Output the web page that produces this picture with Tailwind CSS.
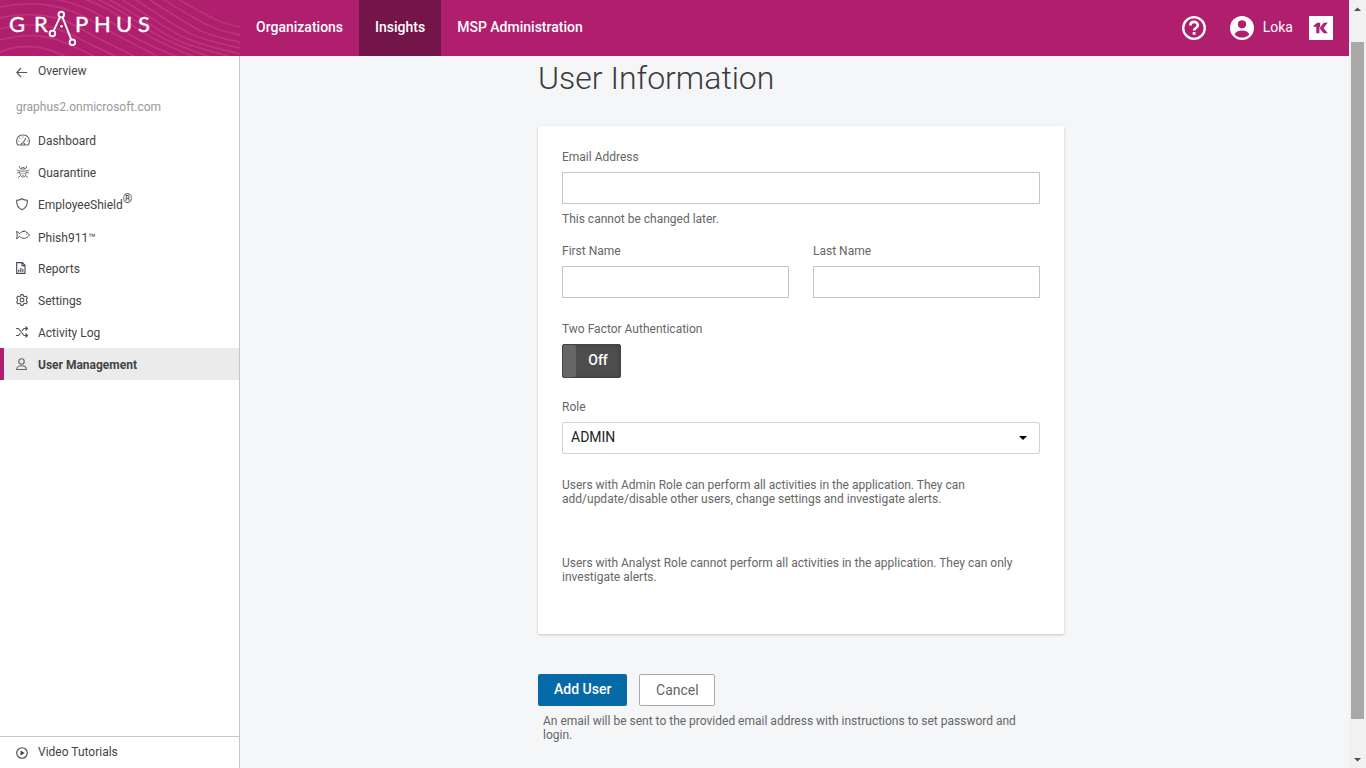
<!DOCTYPE html>
<html lang="en">
<head>
<meta charset="utf-8">
<title>Graphus - User Information</title>
<meta name="viewport" content="width=device-width, initial-scale=1">
<script src="https://cdn.jsdelivr.net/npm/@tailwindcss/browser@4"></script>
</head>
<body class="flex h-screen overflow-hidden bg-[#f5f6f8] font-['Roboto',sans-serif] text-xs text-[#666]">
<div class="flex min-w-0 flex-1 flex-col">
  <header class="relative flex h-14 shrink-0 items-stretch bg-[#b01e6e] text-sm font-medium text-white">
    <svg class="absolute inset-y-0 left-0 h-14 w-60" viewBox="0 0 240 56" fill="none" stroke="#b8347b" stroke-width="1.8" aria-hidden="true">
      <path d="M0 7C38 0 65 5 92 21C125 41 148 50 174 66"/>
      <path d="M0 18C38 10 62 17 85 31C108 45 128 51 140 60"/>
      <path d="M0 29C34 20 58 27 78 38C98 49 110 52 122 60"/>
      <path d="M0 40C32 31 54 37 72 46C86 52 94 56 100 60"/>
      <path d="M0 52C24 42 48 46 72 60"/>
      <path d="M46 -2C84 2 105 18 127 33C150 48 170 52 193 64"/>
      <path d="M74 -4C104 4 120 17 142 32C163 46 184 51 207 63"/>
      <path d="M90 -4C117 7 134 20 154 33C176 47 197 51 222 62"/>
      <path d="M103 -4C129 10 146 22 165 34C187 47 211 50 240 60"/>
      <path d="M116 -4C141 11 158 23 177 34C198 45 218 48 240 54"/>
      <path d="M130 -4C153 11 170 23 189 33C206 41 222 44 240 48"/>
      <path d="M144 -4C164 9 183 22 201 31C215 37 228 40 240 42"/>
      <path d="M158 -4C177 8 194 19 212 27C222 31 231 33 240 35"/>
      <path d="M173 -4C190 6 205 15 219 21C227 24 234 26 240 27"/>
    </svg>
    <a href="#" aria-label="Graphus" class="relative w-60 shrink-0">
      <svg class="h-14 w-40" viewBox="0 0 160 56">
        <g fill="#fff" stroke="#fff" stroke-width=".4" font-family="Lato, sans-serif" font-size="22" font-weight="400">
          <text x="9 34" y="32">GR</text>
          <text x="75 94 116 138" y="32">PHUS</text>
        </g>
        <g fill="none" stroke="#fff" stroke-width="1.9">
          <circle cx="61.3" cy="14.6" r="2.8"/><circle cx="52.4" cy="33.4" r="2.8"/><circle cx="72.4" cy="42.3" r="2.8"/>
          <path d="M60 17.2L53.6 30.8M62.5 17.2L71.2 39.7"/>
        </g>
        <circle cx="61.5" cy="26.3" r="1.4" fill="#fff"/>
      </svg>
    </a>
    <nav class="relative flex" aria-label="Main">
      <a href="#" class="flex items-center px-4 pb-0.5">Organizations</a>
      <a href="#" aria-current="page" class="flex items-center bg-[#731548] px-4 pb-0.5">Insights</a>
      <a href="#" class="flex items-center px-4 pb-0.5">MSP Administration</a>
    </nav>
    <div class="ml-auto flex items-center pr-4">
      <button type="button" aria-label="Help" class="mr-6">
        <svg class="size-6" viewBox="0 0 24 24"><circle cx="12" cy="12" r="10.8" fill="none" stroke="#fff" stroke-width="2.3"/><path d="M8.400 9.600c0-4.900 7.400-4.800 7.400-.4 0 2.800-3.700 2.800-3.700 5.400" fill="none" stroke="#fff" stroke-width="2.6"/><path d="M10.700 16h2.800v2.700h-2.800z" fill="#fff"/></svg>
      </button>
      <button type="button" class="flex items-center gap-[9px] font-normal">
        <svg class="size-6" viewBox="0 0 24 24" aria-hidden="true"><circle cx="12" cy="12" r="12" fill="#fff"/><circle cx="12" cy="8.300" r="4.100" fill="#b01e6e"/><path d="M4.600 18.200c1.600-2.500 4.300-3.600 7.400-3.600s5.800 1.100 7.400 3.600c-1.800 2.200-4.400 3.400-7.400 3.400s-5.600-1.200-7.400-3.400z" fill="#b01e6e"/></svg>
        <span class="pb-0.5">Loka</span>
      </button>
      <button type="button" aria-label="Kaseya One" class="ml-4">
        <svg class="size-6" viewBox="0 0 24 24"><path d="M0 0h24v24H0z" fill="#fff"/><path d="M4.500 9.800L8.200 6.800h3v4.400l3.600-4.400h4l-4.300 5.300 4.300 5.100h-4.100l-4.100-4.900 1-.9-1.200-.300v6.100H7.300V10.800H4.500z" fill="#b01e6e"/></svg>
      </button>
    </div>
  </header>

  <div class="flex min-h-0 flex-1">
    <aside class="flex w-60 shrink-0 flex-col border-r border-[#c4c6c9] bg-white text-[#444]">
      <a href="#" class="flex h-[30px] items-center gap-[9px] px-4">
        <svg class="size-[13px]" viewBox="0 0 13 13" fill="none" stroke="#555" stroke-width="1.1"><path d="M11.200 7.500H.8M5 3L.8 7.500 5 12"/></svg>Overview
      </a>
      <p class="flex h-[38px] items-center px-4 pt-1 text-[#999]">graphus2.onmicrosoft.com</p>
      <nav class="flex flex-col" aria-label="Insights">
        <a href="#" class="flex h-8 items-center gap-[9px] px-4"><svg class="-mr-px size-[14px]" viewBox="0 0 14 14" fill="none" stroke="#666" stroke-width="1.1"><path d="M2 12C-.5 9.500.2 2 7 2s7.500 7.500 5 10zM5.200 12c0-3 3.600-3 3.600 0M7.500 9L10 5"/><path d="M2.300 8h1M3.500 4.800l.8.8M6.500 4h1M10.800 8h1"/></svg><span class="pt-0.5">Dashboard</span></a>
        <a href="#" class="flex h-8 items-center gap-[9px] px-4"><svg class="-mr-px size-[14px]" viewBox="0 0 14 14" fill="none" stroke="#666" stroke-width=".9"><path d="M4 .8C2.700 2.600 4 4 5.300 4h3.400C10 4 11.300 2.600 10 .8M5.300 4l.4-1.400h2.600L8.700 4M.7 4.800c1.500 1.400 4 1.300 6.300 1.300s4.800.1 6.300-1.300M1 8.200l2.800-1.300.5 3.200 1.600 1.900h2.200l1.600-1.900.5-3.200L13 8.200M2 12.500l2.400-1.800M12 12.500l-2.400-1.800M5.300 8.300h1.200M7.500 8.300h1.200M6.200 10.300h1.600"/></svg><span class="pt-0.5">Quarantine</span></a>
        <a href="#" class="flex h-8 items-center gap-[9px] px-4"><svg class="size-[13px]" viewBox="0 0 13 13" fill="none" stroke="#555" stroke-width="1.1"><path d="M6 .7c1.500 1 3.300 1.500 5.300 1.500.3 4.500-1.200 8-5.300 9.500C1.900 10.200.4 6.700.7 2.200 2.700 2.200 4.500 1.700 6 .7z"/></svg><span class="pt-0.5">EmployeeShield<sup class="text-xs">®</sup></span></a>
        <a href="#" class="flex h-8 items-center gap-[9px] px-4"><svg class="-mr-px size-[14px]" viewBox="0 0 14 14" fill="none" stroke="#555"><path d="M.6 2.200l3 2.400C6 1.500 10.500 1.500 13.400 6c-2.900 4.500-7.400 4-9.800 1.400l-3 2.400L1.200 6z"/><path d="M10 5.200h1M7 2.500l1.500-1"/></svg><span class="pt-[3px]">Phish911™</span></a>
        <a href="#" class="flex h-8 items-center gap-[9px] px-4"><svg class="size-[13px]" viewBox="0 0 13 13" fill="none" stroke="#4d4250" stroke-width="1.1"><path d="M.7.600h5.600L9 3.300v8.100H.7zM6 .8v2.800h2.800M2.800 10V7.500M4.800 10V6M6.800 10V7"/></svg><span class="pt-0.5">Reports</span></a>
        <a href="#" class="flex h-8 items-center gap-[9px] px-4"><svg class="size-[13px]" viewBox="0 0 13 13" fill="none" stroke="#555" stroke-width="1.1"><path d="M5 .6h2l.5 1.500 1.200.6 1.500-.5L11.400 4l-.9 1.200v1.600l.9 1.200-1.200 1.800-1.500-.5-1.200.6L7 11.400H5l-.5-1.500-1.200-.6-1.500.5L.6 8l.9-1.200V5.200L.6 4l1.200-1.800 1.500.5 1.200-.6z"/><circle cx="6" cy="6" r="1.900"/></svg><span class="pt-0.5">Settings</span></a>
        <a href="#" class="flex h-8 items-center gap-[9px] px-4"><svg class="size-[13px]" viewBox="0 0 13 13" fill="none" stroke="#555" stroke-width="1.1"><path d="M0 2.500h2.500l5.500 7h3.500M0 9.500h2.500l1.800-2.200M6 4.900l2-2.400h3.500M9.500.5l2 2-2 2M9.500 7.500l2 2-2 2"/></svg><span class="pt-0.5">Activity Log</span></a>
        <a href="#" aria-current="page" class="flex h-8 items-center gap-[9px] border-l-4 border-[#b01e6e] bg-[#ebebeb] pl-3 font-bold"><svg class="size-[13px]" viewBox="0 0 13 13" fill="none" stroke="#666" stroke-width="1.1"><circle cx="5.500" cy="3.500" r="2.700"/><path d="M.6 11.500c0-5 9.800-5 9.800 0z"/></svg><span class="pt-0.5">User Management</span></a>
      </nav>
      <a href="#" class="mt-auto flex h-8 items-center gap-[9px] border-t border-[#c4c6c9] px-4"><svg class="size-[13px]" viewBox="0 0 13 13"><circle cx="6" cy="7" r="5.300" fill="none" stroke="#444" stroke-width="1.1"/><path d="M4.500 4.500L8.700 7l-4.200 2.500z" fill="#444"/></svg><span class="pb-0.5">Video Tutorials</span></a>
    </aside>

    <main class="min-w-0 flex-1 overflow-hidden pl-[13px]">
      <form class="mx-auto max-w-[526px]">
        <h1 class="pt-0.5 text-[32px] leading-10 font-light text-[#3c3c3c]">User Information</h1>
        <section class="mt-7 rounded-xs bg-white px-6 pt-6 pb-[50px] leading-[14px] shadow-[0_1px_3px_rgba(0,0,0,0.2)]">
          <label for="email" class="block">Email Address</label>
          <input id="email" type="email" class="mt-2 block h-8 w-full border border-[#c4c4c4] px-2 text-sm">
          <p class="mt-2">This cannot be changed later.</p>
          <div class="mt-[18px] grid grid-cols-2 gap-6">
            <div><label for="first" class="block">First Name</label><input id="first" type="text" class="mt-2 block h-8 w-full border border-[#c4c4c4] px-2 text-sm"></div>
            <div><label for="last" class="block">Last Name</label><input id="last" type="text" class="mt-2 block h-8 w-full border border-[#c4c4c4] px-2 text-sm"></div>
          </div>
          <label for="tfa" class="mt-6 block">Two Factor Authentication</label>
          <label class="mt-2 flex h-[34px] w-[59px] items-stretch rounded-xs border border-[#444] bg-[#4d4d4d] text-sm font-medium text-white shadow-[inset_0_0_4px_rgba(0,0,0,0.2)]">
            <input id="tfa" type="checkbox" role="switch" class="sr-only">
            <span class="w-[13px] rounded-xs bg-[#666]"></span>
            <span class="flex flex-1 items-center justify-center pb-0.5">Off</span>
          </label>
          <label for="role" class="mt-[22px] block">Role</label>
          <div class="relative mt-2">
            <select id="role" class="block h-8 w-full appearance-none rounded-xs border border-[#d2d2d2] bg-white px-2 pb-0.5 text-sm text-[#222]"><option>ADMIN</option><option>ANALYST</option></select>
            <svg class="pointer-events-none absolute top-3.5 right-[13px] h-1 w-2" viewBox="0 0 8 4" aria-hidden="true"><path d="M0 0h8L4 4z" fill="#000"/></svg>
          </div>
          <p class="mt-6">Users with Admin Role can perform all activities in the application. They can add/update/disable other users, change settings and investigate alerts.</p>
          <p class="mt-[50px]">Users with Analyst Role cannot perform all activities in the application. They can only investigate alerts.</p>
        </section>
        <div class="mt-10 flex gap-3 text-sm">
          <button type="submit" class="h-8 rounded-xs bg-[#0669a8] px-4 pb-0.5 font-medium text-white">Add User</button>
          <button type="button" class="h-8 w-[76px] rounded-xs border border-[#aaa] bg-white">Cancel</button>
        </div>
        <p class="mt-2 max-w-[490px] pl-[5px] leading-[14px]">An email will be sent to the provided email address with instructions to set password and login.</p>
      </form>
    </main>
  </div>
</div>
<div class="flex w-[17px] shrink-0 flex-col items-center bg-[#f1f1f1]" aria-hidden="true">
  <svg class="h-[17px] w-[17px]" viewBox="0 0 17 17"><path d="M5 11h7L8.500 7.500z" fill="#505050"/></svg>
  <div class="mt-[25px] w-[13px] flex-1 bg-[#a8a8a8]"></div>
  <svg class="mt-8 h-[17px] w-[17px]" viewBox="0 0 17 17"><path d="M5 7h7l-3.500 3.500z" fill="#505050"/></svg>
</div>
</body>
</html>
